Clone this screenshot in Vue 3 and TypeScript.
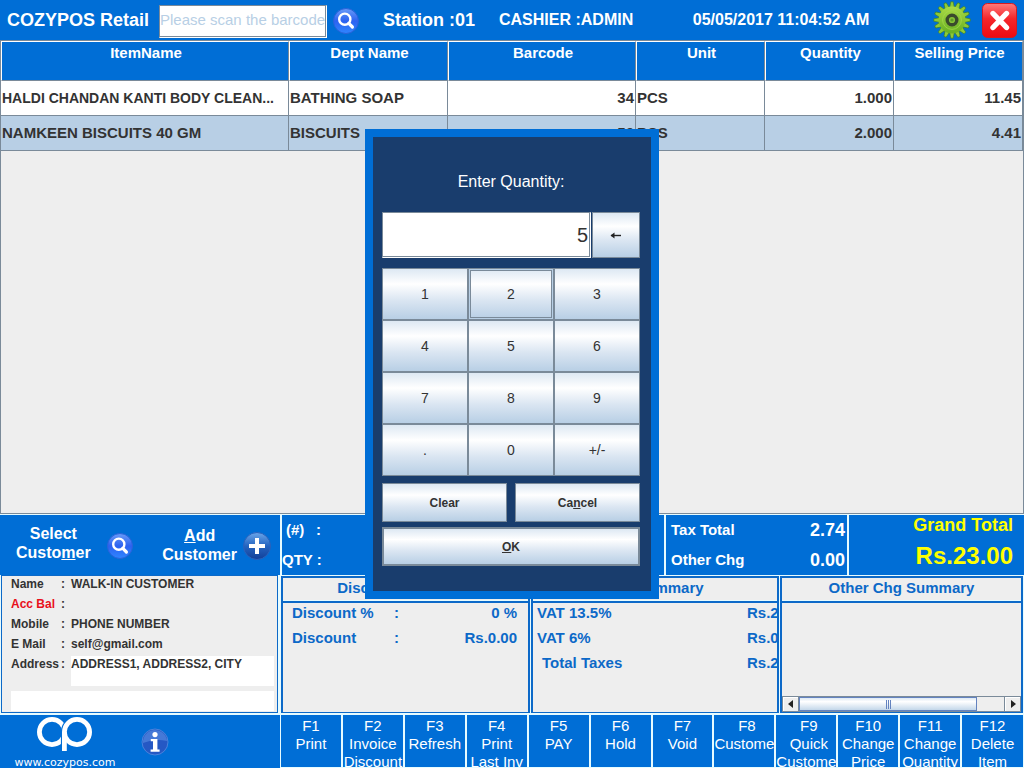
<script setup lang="ts">
import { ref } from 'vue'

interface Item {
  name: string
  dept: string
  barcode: string
  unit: string
  qty: string
  price: string
}

const items: Item[] = [
  { name: 'HALDI CHANDAN KANTI BODY CLEAN...', dept: 'BATHING SOAP', barcode: '34', unit: 'PCS', qty: '1.000', price: '11.45' },
  { name: 'NAMKEEN BISCUITS 40 GM', dept: 'BISCUITS', barcode: '50', unit: 'PCS', qty: '2.000', price: '4.41' },
]
const selected = ref(1)

const contact = [
  { label: 'Name', value: 'WALK-IN CUSTOMER', due: false },
  { label: 'Acc Bal', value: '', due: true },
  { label: 'Mobile', value: 'PHONE NUMBER', due: false },
  { label: 'E Mail', value: 'self@gmail.com', due: false },
]

const taxes = [
  { label: 'VAT 13.5%', value: 'Rs.2.74', total: false },
  { label: 'VAT 6%', value: 'Rs.0.00', total: false },
  { label: 'Total Taxes', value: 'Rs.2.74', total: true },
]

const functionKeys: string[][] = [
  ['F1', 'Print'],
  ['F2', 'Invoice', 'Discount'],
  ['F3', 'Refresh'],
  ['F4', 'Print', 'Last Inv'],
  ['F5', 'PAY'],
  ['F6', 'Hold'],
  ['F7', 'Void'],
  ['F8', 'Customer'],
  ['F9', 'Quick', 'Customer'],
  ['F10', 'Change', 'Price'],
  ['F11', 'Change', 'Quantity'],
  ['F12', 'Delete', 'Item'],
]

const pad = ['1', '2', '3', '4', '5', '6', '7', '8', '9', '.', '0', '+/-']
const quantity = ref('5')
const active = ref('2')
const open = ref(true)

function press(key: string) {
  active.value = key
  if (key === '+/-') {
    quantity.value = quantity.value.startsWith('-') ? quantity.value.slice(1) : '-' + quantity.value
  } else if (key !== '.' || !quantity.value.includes('.')) {
    quantity.value += key
  }
}

const teeth = Array.from({ length: 16 }, (_, i) => i * 22.5)
</script>

<template>
  <div class="pos">
    <svg class="defs" aria-hidden="true">
      <defs>
        <linearGradient id="orb" x1="0" y1="0" x2="0" y2="1">
          <stop offset="0" stop-color="#6a9cf8" />
          <stop offset="0.5" stop-color="#2c62f0" />
          <stop offset="1" stop-color="#2f86ff" />
        </linearGradient>
        <linearGradient id="orbDark" x1="0" y1="0" x2="0" y2="1">
          <stop offset="0" stop-color="#6aa6ea" />
          <stop offset="0.5" stop-color="#2464c0" />
          <stop offset="1" stop-color="#123f98" />
        </linearGradient>
        <linearGradient id="leaf" gradientUnits="userSpaceOnUse" x1="0" y1="1" x2="0" y2="37">
          <stop offset="0" stop-color="#b6e24c" />
          <stop offset="1" stop-color="#5aa81c" />
        </linearGradient>
        <linearGradient id="alarm" x1="0" y1="0" x2="0" y2="1">
          <stop offset="0" stop-color="#ff7a7a" />
          <stop offset="0.45" stop-color="#f5262b" />
          <stop offset="1" stop-color="#ee0a12" />
        </linearGradient>
      </defs>
    </svg>

    <header class="topbar">
      <strong class="brand">COZYPOS Retail</strong>
      <input class="scan" type="text" placeholder="Please scan the barcode" aria-label="Barcode" />
      <button class="icon-btn find" type="button" aria-label="Search item">
        <svg width="26" height="26" viewBox="0 0 26 26">
          <circle cx="13" cy="13" r="12.5" fill="url(#orb)" stroke="#2a62d8" />
          <circle cx="11.8" cy="11.2" r="5.6" fill="none" stroke="#fff" stroke-width="2.4" />
          <path d="M15.8 15.4l3.6 3.6" stroke="#fff" stroke-width="3.2" stroke-linecap="round" />
        </svg>
      </button>
      <strong class="station">Station :01</strong>
      <strong class="cashier">CASHIER :ADMIN</strong>
      <strong class="clock">05/05/2017 11:04:52 AM</strong>
      <button class="icon-btn" type="button" aria-label="Settings">
        <svg width="38" height="38" viewBox="0 0 38 38">
          <g fill="#8fca36" stroke="#3f7d1a" stroke-width="0.6">
            <path v-for="t in teeth" :key="t" :transform="`rotate(${t} 19 19)`" d="M16.6 7L17.8 0.8H20.2L21.4 7Z" />
          </g>
          <circle cx="19" cy="19" r="13.4" fill="url(#leaf)" />
          <circle cx="19" cy="19" r="9.4" fill="none" stroke="#a5d84c" stroke-width="0.8" />
          <circle cx="19" cy="19" r="4.8" fill="#86c436" stroke="#3a4a2c" stroke-width="3.4" />
          <circle cx="19" cy="19" r="1.6" fill="#5d9a2c" />
        </svg>
      </button>
      <button class="icon-btn" type="button" aria-label="Close">
        <svg width="35" height="35" viewBox="0 0 35 35">
          <rect x="0.5" y="0.5" width="34" height="34" rx="5" fill="url(#alarm)" stroke="#d81a20" />
          <path d="M11 10.5L24.5 24.5M24.5 10.5L11 24.5" stroke="#fff" stroke-width="5.4" stroke-linecap="round" />
        </svg>
      </button>
    </header>

    <main class="items">
      <table>
        <colgroup>
          <col class="c-name" /><col class="c-dept" /><col class="c-code" /><col class="c-num" /><col class="c-num" /><col class="c-num" />
        </colgroup>
        <thead>
          <tr>
            <th>ItemName</th><th>Dept Name</th><th>Barcode</th><th>Unit</th><th>Quantity</th><th>Selling Price</th>
          </tr>
        </thead>
        <tbody>
          <tr v-for="(item, i) in items" :key="item.name" :class="{ selected: i === selected }" @click="selected = i">
            <td :class="{ long: item.name.length > 30 }">{{ item.name }}</td>
            <td>{{ item.dept }}</td>
            <td class="num">{{ item.barcode }}</td>
            <td>{{ item.unit }}</td>
            <td class="num">{{ item.qty }}</td>
            <td class="num">{{ item.price }}</td>
          </tr>
        </tbody>
      </table>
    </main>

    <section class="totals">
      <div class="customer-actions">
        <button class="cust select" type="button">
          <span>Select<br />Custo<u>m</u>er</span>
          <svg width="26" height="26" viewBox="0 0 26 26">
            <circle cx="13" cy="13" r="12.5" fill="url(#orb)" stroke="#2a62d8" />
            <circle cx="11.8" cy="11.2" r="5.6" fill="none" stroke="#fff" stroke-width="2.4" />
            <path d="M15.8 15.4l3.6 3.6" stroke="#fff" stroke-width="3.2" stroke-linecap="round" />
          </svg>
        </button>
        <button class="cust add" type="button">
          <span><u>A</u>dd<br />Customer</span>
          <svg width="28" height="28" viewBox="0 0 28 28">
            <circle cx="14" cy="14" r="13.5" fill="url(#orbDark)" stroke="#2a62bc" />
            <path d="M14 6v16M6 14h16" stroke="#fff" stroke-width="4" />
          </svg>
        </button>
      </div>
      <div class="counts">
        <div class="count"><span class="hash">(#)</span><span>:</span></div>
        <div class="count"><span>QTY :</span></div>
      </div>
      <div class="charges">
        <div class="charge"><span>Tax Total</span><b>2.74</b></div>
        <div class="charge"><span>Other Chg</span><b>0.00</b></div>
      </div>
      <div class="grand">
        <div class="grand-label">Grand Total</div>
        <div class="grand-value">Rs.23.00</div>
      </div>
    </section>

    <section class="summary">
      <div class="customer">
        <div class="details">
          <div v-for="row in contact" :key="row.label" class="detail">
            <span :class="{ due: row.due }">{{ row.label }}</span><span>:</span><span>{{ row.value }}</span>
          </div>
          <div class="detail">
            <label for="address">Address</label><span>:</span>
            <textarea id="address" readonly value="ADDRESS1, ADDRESS2, CITY"></textarea>
          </div>
          <input class="note" type="text" aria-label="Customer note" readonly />
        </div>
      </div>
      <div class="panels">
        <section class="panel">
          <h2>Discount Summary</h2>
          <div class="discount"><span>Discount %</span><span>:</span><span class="amount">0 %</span></div>
          <div class="discount"><span>Discount</span><span>:</span><span class="amount">Rs.0.00</span></div>
        </section>
        <section class="panel">
          <h2>Tax Summary</h2>
          <div v-for="tax in taxes" :key="tax.label" class="tax" :class="{ total: tax.total }">
            <span>{{ tax.label }}</span><span class="tax-amount">{{ tax.value }}</span>
          </div>
        </section>
        <section class="panel">
          <h2>Other Chg Summary</h2>
          <div class="scrollbar">
            <button type="button" aria-label="Scroll left"><svg width="6" height="8" viewBox="0 0 6 8"><path d="M5 0v8L0 4z" fill="#222" /></svg></button>
            <div class="track"><div class="thumb"><i></i><i></i><i></i></div></div>
            <button type="button" aria-label="Scroll right"><svg width="6" height="8" viewBox="0 0 6 8"><path d="M1 0v8l5-4z" fill="#222" /></svg></button>
          </div>
        </section>
      </div>
    </section>

    <footer class="bottom">
      <div class="about">
        <div class="logo">
          <svg width="58" height="37" viewBox="0 0 58 37">
            <circle cx="16" cy="17" r="12.6" fill="none" stroke="#fff" stroke-width="4.8" />
            <path d="M28.4 37V17a12.6 12.6 0 1 1 7 11.3" fill="none" stroke="#006ed6" stroke-width="7" />
            <circle cx="41" cy="17" r="12.6" fill="none" stroke="#fff" stroke-width="4.8" />
            <path d="M28.4 17v19" stroke="#fff" stroke-width="4.8" />
          </svg>
          <a href="#">www.cozypos.com</a>
        </div>
        <button class="icon-btn info" type="button" aria-label="Information">
          <svg width="28" height="28" viewBox="0 0 28 28">
            <circle cx="14" cy="14" r="13" fill="#2558c4" stroke="#4a83dc" />
            <path d="M2 15a12 12 0 0 1 24-2q-12-3-24 2z" fill="#5b8fe4" opacity="0.6" />
            <circle cx="14" cy="6.6" r="2.6" fill="#fff" />
            <path d="M9.8 11h6.6v10.6h2.2v2.2H9.6v-2.2h2.4v-8.4H9.8z" fill="#fff" />
          </svg>
        </button>
      </div>
      <nav class="keys">
        <button v-for="lines in functionKeys" :key="lines[0]" type="button" class="fkey">
          <span class="fkey-text"><span v-for="(line, i) in lines" :key="i" class="line">{{ line }}</span></span>
        </button>
      </nav>
    </footer>

    <div v-if="open" class="overlay">
      <form class="dialog" role="dialog" @submit.prevent="open = false">
        <label class="prompt" for="quantity">Enter Quantity:</label>
        <div class="entry">
          <input id="quantity" v-model="quantity" type="text" />
          <button type="button" class="metal" aria-label="Backspace" @click="quantity = quantity.slice(0, -1)">
            <svg width="12" height="8" viewBox="0 0 12 8"><path d="M1 4.5h10" stroke="#222" stroke-width="1.4" /><path d="M0.5 4.5L4.5 1.5V7.5Z" fill="#222" /></svg>
          </button>
        </div>
        <div class="pad">
          <button v-for="key in pad" :key="key" type="button" class="metal" :class="{ active: key === active }" @click="press(key)">{{ key }}</button>
        </div>
        <div class="actions">
          <button type="button" class="metal" @click="quantity = ''">Clear</button>
          <button type="button" class="metal" @click="open = false">Ca<u>n</u>cel</button>
          <button type="submit" class="metal ok"><u>O</u>K</button>
        </div>
      </form>
    </div>
  </div>
</template>

<style>
body {
  margin: 0;
}
</style>

<style scoped>
.pos {
  --blue: #006ed6;
  --ink: #333;
  --line: #7a8a99;
  --pale: #eee;
  --steel: #b8cfe5;
  --frost: #e6fbff;
  --text-blue: #0c69c8;
  display: flex;
  flex-direction: column;
  position: relative;
  height: 100vh;
  overflow: hidden;
  background: var(--blue);
  color: var(--ink);
  font: bold 15px/18px "Liberation Sans", Arial, sans-serif;
}
.pos *,
.pos *::before {
  box-sizing: border-box;
}
.defs {
  position: absolute;
  width: 0;
  height: 0;
}
button,
input,
textarea {
  margin: 0;
  padding: 0;
  border: 0;
  border-radius: 0;
  outline: 0;
  font: inherit;
  color: inherit;
}
svg {
  display: block;
  flex: none;
}
.icon-btn {
  background: none;
}

/* top bar */
.topbar {
  display: flex;
  align-items: center;
  height: 40px;
  flex: none;
  padding: 0 7px;
  color: #fff;
  font-size: 16px;
  white-space: nowrap;
}
.brand {
  width: 152px;
  font-size: 18px;
}
.scan {
  width: 168px;
  height: 33px;
  margin-top: 2px;
  padding-bottom: 3px;
  background: #fff;
  border: 1px solid #fff;
  border-top-color: var(--line);
  border-left-color: var(--line);
  box-shadow: inset -1px -1px var(--line);
  color: var(--ink);
  font-weight: normal;
  font-size: 15px;
}
.scan::placeholder {
  color: var(--steel);
  opacity: 1;
}
.find {
  margin: 2px 24px 0 6px;
}
.station {
  width: 116px;
  font-size: 18px;
}
.clock {
  width: 182px;
  margin: 0 61px 0 auto;
  text-align: center;
}
.topbar .icon-btn + .icon-btn {
  margin-left: 11px;
}

/* item table */
.items {
  flex: 1;
  min-height: 0;
  background: var(--pale);
  border: 1px solid var(--line);
}
table {
  width: 100%;
  table-layout: fixed;
  border-collapse: separate;
  border-spacing: 0;
}
.c-name { width: 288px; }
.c-dept { width: 159px; }
.c-code { width: 188px; }
.c-num { width: 129px; }
th {
  height: 40px;
  padding: 2px 0 0 2px;
  vertical-align: top;
  background: var(--blue);
  border: 1px solid #fff;
  border-right-color: var(--line);
  border-bottom-color: var(--line);
  color: #fff;
}
td {
  height: 35px;
  padding: 0 1px;
  overflow: hidden;
  white-space: nowrap;
  background: #fff;
  border-right: 1px solid var(--line);
  border-bottom: 1px solid var(--line);
}
.selected td {
  background: var(--steel);
}
.long {
  font-size: 14px;
}
.num {
  text-align: right;
}

/* totals strip */
.totals {
  display: grid;
  grid-template-columns: 280px 384fr 183fr 177fr;
  height: 61px;
  flex: none;
  border-top: 1px solid var(--frost);
  color: #fff;
}
.totals > div + div {
  border-left: 2px solid var(--frost);
}
.customer-actions {
  display: flex;
  align-items: center;
  padding: 0 9px 0 16px;
  justify-content: space-between;
}
.cust {
  display: flex;
  align-items: center;
  background: none;
  font-size: 16px;
  line-height: 19px;
}
.cust span {
  padding-bottom: 2px;
}
.select {
  gap: 16px;
}
.select span {
  padding-bottom: 6px;
}
.add {
  gap: 6px;
}
.count {
  display: flex;
  height: 30px;
  align-items: center;
}
.hash {
  width: 34px;
  padding-left: 4px;
}
.charge {
  display: flex;
  height: 30px;
  align-items: center;
  justify-content: space-between;
  padding: 0 2px 0 5px;
}
.charge b {
  font-size: 18px;
}
.grand {
  padding-right: 11px;
  text-align: right;
  color: #ff0;
}
.grand-label {
  font-size: 18px;
  line-height: 20px;
}
.grand-value {
  font-size: 24px;
  line-height: 42px;
}

/* summary panels */
.summary {
  display: flex;
  height: 139px;
  flex: none;
  background: var(--frost);
}
.customer {
  width: 280px;
  flex: none;
  padding: 0 2px 1px 1px;
}
.details {
  height: 100%;
  padding: 1px 3px 0 9px;
  background: var(--pale);
  border: 1px solid var(--text-blue);
  font-size: 12px;
  line-height: 14px;
}
.detail {
  display: grid;
  grid-template-columns: 50px 10px 1fr;
  height: 20px;
  white-space: nowrap;
}
.due {
  color: #e8101c;
}
.detail textarea {
  width: 100%;
  height: 30px;
  margin-top: -1px;
  padding-top: 1px;
  background: #fff;
  resize: none;
  overflow: hidden;
}
.note {
  display: block;
  width: 100%;
  height: 20px;
  margin-top: 14px;
  background: #fff;
}
.panels {
  display: grid;
  flex: 1;
  grid-template-columns: 249fr 248fr 243fr;
  gap: 1px;
  padding: 1px;
  min-width: 0;
}
.panel {
  display: flex;
  flex-direction: column;
  min-width: 0;
  overflow: hidden;
  background: var(--pale);
  border: 2px solid var(--text-blue);
  border-bottom-width: 1px;
  color: var(--text-blue);
}
h2 {
  flex: none;
  margin: 0;
  height: 25px;
  border-bottom: 2px solid var(--text-blue);
  box-shadow: inset 0 -1px var(--frost);
  font-size: 15px;
  line-height: 20px;
  text-align: center;
}
.discount,
.tax {
  display: grid;
  height: 25px;
  line-height: 20px;
  white-space: nowrap;
}
.discount {
  grid-template-columns: 102px auto 1fr;
  padding: 0 11px 0 9px;
}
.amount {
  text-align: right;
}
.tax {
  grid-template-columns: 1fr 30px;
  padding-left: 4px;
}
.total span:first-child {
  padding-left: 5px;
}
.scrollbar {
  display: flex;
  height: 16px;
  margin-top: auto;
  border: 1px solid var(--line);
}
.scrollbar button {
  display: grid;
  place-items: center;
  width: 15px;
  background: var(--pale);
  box-shadow: inset 1px 1px #fff;
}
.track {
  flex: 1;
  border: solid var(--line);
  border-width: 0 1px;
}
.thumb {
  display: flex;
  justify-content: center;
  align-items: center;
  gap: 1px;
  width: 87%;
  height: 14px;
  background: linear-gradient(#dde8f3, #fff 30%, #c3d7ea);
  border: 1px solid #6382bf;
}
.thumb i {
  width: 1px;
  height: 9px;
  background: #6382bf;
}

/* bottom bar */
.bottom {
  display: flex;
  height: 54px;
  flex: none;
  border-top: 1px solid var(--frost);
  color: #fff;
}
.about {
  display: flex;
  width: 280px;
  flex: none;
  padding-left: 14px;
}
.logo {
  display: flex;
  flex-direction: column;
  align-items: center;
  width: 102px;
}
.logo a {
  margin-top: 3px;
  color: #fff;
  font: 11px/16px "DejaVu Sans", sans-serif;
  text-decoration: none;
}
.info {
  align-self: center;
  margin-left: 25px;
}
.keys {
  display: grid;
  flex: 1;
  grid-template-columns: repeat(12, minmax(0, 1fr));
  border-left: 1px solid var(--frost);
}
.fkey {
  display: flex;
  align-items: flex-start;
  overflow: hidden;
  padding-top: 2px;
  background: var(--blue);
  border-right: 2px solid var(--frost);
  border-bottom: 1px solid var(--frost);
  font-weight: normal;
}
.fkey:last-child {
  border-right-width: 1px;
}
.fkey-text {
  flex: none;
  min-width: 100%;
  white-space: nowrap;
}
.line {
  display: block;
  text-align: center;
}

/* quantity dialog */
.overlay {
  position: absolute;
  inset: 0;
  display: grid;
  place-items: center;
  padding-bottom: 40px;
}
.dialog {
  width: 294px;
  padding: 29px 11px 25px 9px;
  background: #193d6d;
  border: 8px solid var(--blue);
}
.prompt {
  display: block;
  margin-bottom: 15px;
  color: #fff;
  font-size: 16px;
  font-weight: normal;
  line-height: 31px;
  text-align: center;
}
.entry {
  display: flex;
  height: 46px;
  gap: 1px;
  margin-bottom: 10px;
}
.entry input {
  flex: 1;
  min-width: 0;
  padding-right: 2px;
  background: #fff;
  border: 1px solid #fff;
  border-top-color: var(--line);
  border-left-color: var(--line);
  box-shadow: inset -1px -1px var(--line);
  font-size: 20px;
  font-weight: normal;
  text-align: right;
}
.entry button {
  width: 48px;
}
.metal {
  display: grid;
  place-items: center;
  grid-auto-flow: column;
  justify-content: center;
  background: linear-gradient(#dde8f3, #fff 30%, #dbe6f2 62%, #b8cfe5);
  border: 1px solid var(--line);
}
.pad {
  display: grid;
  grid-template-columns: repeat(3, 1fr);
  grid-auto-rows: 52px;
  margin-bottom: 7px;
  font-size: 14px;
  font-weight: normal;
}
.active {
  box-shadow: inset 0 0 0 1px var(--steel), inset 0 0 0 2px var(--line);
}
.actions {
  display: grid;
  grid-template-columns: 1fr 1fr;
  grid-auto-rows: 39px;
  gap: 5px 8px;
  font-size: 12px;
}
.ok {
  grid-column: 1 / -1;
  border-width: 2px;
}
</style>
